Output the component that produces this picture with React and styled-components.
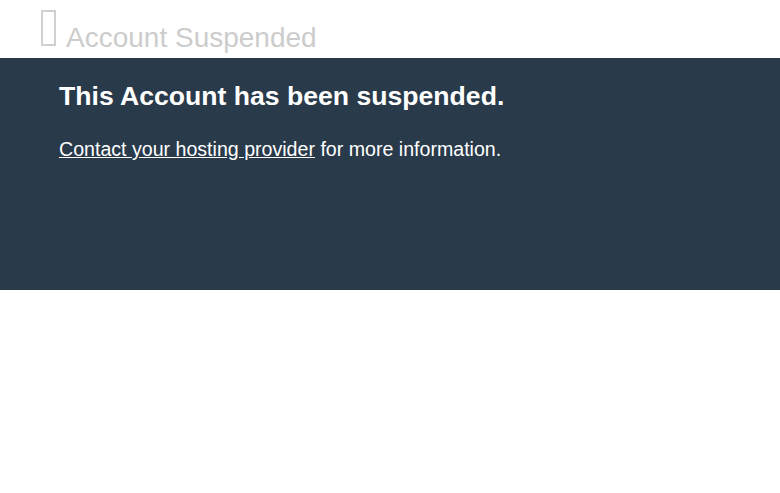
import styled, { createGlobalStyle } from 'styled-components';

const GlobalStyle = createGlobalStyle`
  html, body {
    margin: 0;
    padding: 0;
    background: #ffffff;
    font-family: "Liberation Sans", Arial, Helvetica, sans-serif;
  }
`

const StHeader = styled.header`
  display: flex;
  align-items: flex-end;
  height: 58px;
  padding-left: 41px;
  box-sizing: border-box;
  padding-bottom: 6px;
`

const StIconBox = styled.span`
  display: inline-block;
  width: 15px;
  height: 36px;
  box-sizing: border-box;
  border: 2px solid #d0d0d0;
  margin-right: 10px;
  align-self: flex-start;
  margin-top: 10px;
`

const StTitle = styled.span`
  font-size: 28px;
  color: #cccccc;
  line-height: 1;
`

const StBand = styled.section`
  background: #293a4a;
  height: 232px;
  box-sizing: border-box;
  padding: 23px 59px 0;
  color: #ffffff;

  h1 {
    margin: 0;
    font-size: 26.6px;
    font-weight: 700;
  }

  p {
    margin: 26px 0 0;
    font-size: 19.6px;
  }

  a {
    color: #ffffff;
    text-decoration: underline;
  }
`

export default function App() {
    return <>
        <GlobalStyle/>
        <StHeader>
            <StIconBox/>
            <StTitle>Account Suspended</StTitle>
        </StHeader>
        <StBand>
            <h1>This Account has been suspended.</h1>
            <p><a href="#">Contact your hosting provider</a> for more information.</p>
        </StBand>
    </>
}
